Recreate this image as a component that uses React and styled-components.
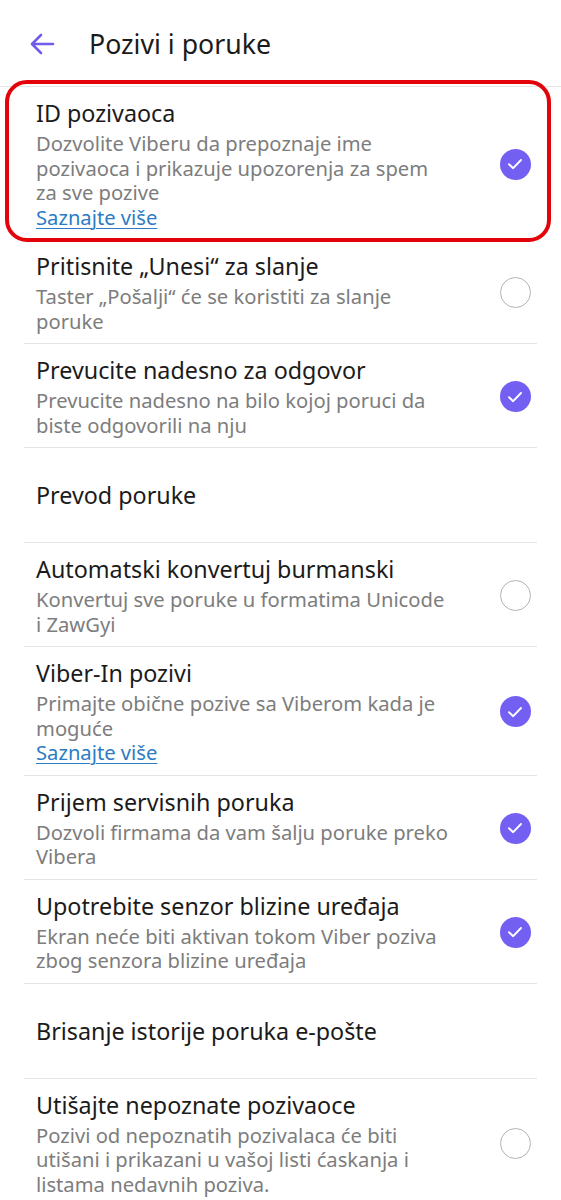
import React from 'react';
import styled, { createGlobalStyle } from 'styled-components';

const GlobalStyle = createGlobalStyle`
    body {
        margin: 0;
        background: #ffffff;
        font-family: "Noto Sans", Roboto, sans-serif;
    }
`;

const Page = styled.div`
    width: 561px;
    min-height: 1200px;
    background: #ffffff;
    overflow: hidden;
`;

const Header = styled.div`
    height: 87px;
    display: flex;
    align-items: center;
    padding: 2px 0 0 28px;
    gap: 33px;
    border-bottom: 1px solid #e6e6e6;
    box-sizing: border-box;
`;

const Title = styled.h1`
    margin: 0;
    font-size: 26.7px;
    line-height: 32px;
    font-weight: 400;
    color: #1b1b1b;
`;

const List = styled.div`
    padding: 0 24px;
`;

const Highlight = styled.div`
    position: relative;

    &::after {
        content: '';
        position: absolute;
        top: -7px;
        bottom: -2px;
        left: -19px;
        right: -14px;
        border: 4px solid #e3040b;
        border-radius: 22px;
        pointer-events: none;
    }
`;

const Row = styled.div`
    display: flex;
    align-items: center;
    padding: ${p => p.$single ? '0' : '12px 0 10px'};
    min-height: ${p => p.$single ? '95px' : 'auto'};
    box-sizing: border-box;
    border-bottom: ${p => p.$last ? 'none' : '1px solid #e4e4e4'};
`;

const Text = styled.div`
    flex: 1;
    padding-left: 12px;
    max-width: 418px;
`;

const RowTitle = styled.div`
    font-size: 23.3px;
    line-height: 28px;
    color: #1b1b1b;
`;

const RowSub = styled.div`
    margin-top: 4px;
    font-size: 20.2px;
    line-height: 24.5px;
    color: #7d7d7d;
`;

const Link = styled.a`
    display: block;
    font-size: 20.2px;
    line-height: 24.5px;
    color: #2b7cc4;
    text-decoration: underline;
    text-decoration-thickness: 1px;
    text-underline-offset: 3px;
`;

const CheckSlot = styled.div`
    margin-left: auto;
    margin-right: 6px;
    width: 32px;
    height: 32px;
    display: flex;
    align-items: center;
    justify-content: center;
`;

const Circle = styled.div`
    width: 31px;
    height: 31px;
    border-radius: 50%;
    box-sizing: border-box;
    display: flex;
    align-items: center;
    justify-content: center;
    background: ${p => p.$on ? '#7360f2' : 'transparent'};
    border: ${p => p.$on ? 'none' : '1.5px solid #b3b3b3'};
`;

const BackArrow = () => (
    <svg width="28" height="24" viewBox="0 0 28 24" fill="none">
        <path d="M25 12H4M13 3l-9 9 9 9" stroke="#6f5ce8" strokeWidth="2.6" strokeLinecap="round" strokeLinejoin="round" />
    </svg>
);

const Check = ({ on }) => (
    <CheckSlot>
        <Circle $on={on}>
            {on && (
                <svg width="16" height="12" viewBox="0 0 16 12" fill="none">
                    <path d="M2 6.2l4.2 4L14 2" stroke="#ffffff" strokeWidth="1.9" strokeLinecap="round" strokeLinejoin="round" />
                </svg>
            )}
        </Circle>
    </CheckSlot>
);

const items = [
    {
        title: 'Pritisnite \u201EUnesi\u201C za slanje',
        sub: 'Taster \u201EPošalji\u201C će se koristiti za slanje poruke',
        check: false,
    },
    {
        title: 'Prevucite nadesno za odgovor',
        sub: 'Prevucite nadesno na bilo kojoj poruci da biste odgovorili na nju',
        check: true,
    },
    { title: 'Prevod poruke' },
    {
        title: 'Automatski konvertuj burmanski',
        sub: 'Konvertuj sve poruke u formatima Unicode i ZawGyi',
        check: false,
    },
    {
        title: 'Viber-In pozivi',
        sub: 'Primajte obične pozive sa Viberom kada je moguće',
        link: true,
        check: true,
    },
    {
        title: 'Prijem servisnih poruka',
        sub: 'Dozvoli firmama da vam šalju poruke preko Vibera',
        check: true,
    },
    {
        title: 'Upotrebite senzor blizine uređaja',
        sub: 'Ekran neće biti aktivan tokom Viber poziva zbog senzora blizine uređaja',
        check: true,
    },
    { title: 'Brisanje istorije poruka e-pošte' },
    {
        title: 'Utišajte nepoznate pozivaoce',
        sub: 'Pozivi od nepoznatih pozivalaca će biti utišani i prikazani u vašoj listi ćaskanja i listama nedavnih poziva.',
        check: false,
    },
];

const SettingRow = ({ title, sub, link, check, last }) => (
    <Row $single={!sub} $last={last}>
        <Text>
            <RowTitle>{title}</RowTitle>
            {sub && <RowSub>{sub}</RowSub>}
            {link && <Link>Saznajte više</Link>}
        </Text>
        {check !== undefined && <Check on={check} />}
    </Row>
);

const App = () => {
    return (
        <Page>
            <GlobalStyle />
            <Header>
                <BackArrow />
                <Title>Pozivi i poruke</Title>
            </Header>
            <List>
                <Highlight>
                    <SettingRow
                        title="ID pozivaoca"
                        sub="Dozvolite Viberu da prepoznaje ime pozivaoca i prikazuje upozorenja za spem za sve pozive"
                        link
                        check
                    />
                </Highlight>
                {items.map((it, i) => (
                    <SettingRow key={i} {...it} last={i === items.length - 1} />
                ))}
            </List>
        </Page>
    );
};

export default App;
